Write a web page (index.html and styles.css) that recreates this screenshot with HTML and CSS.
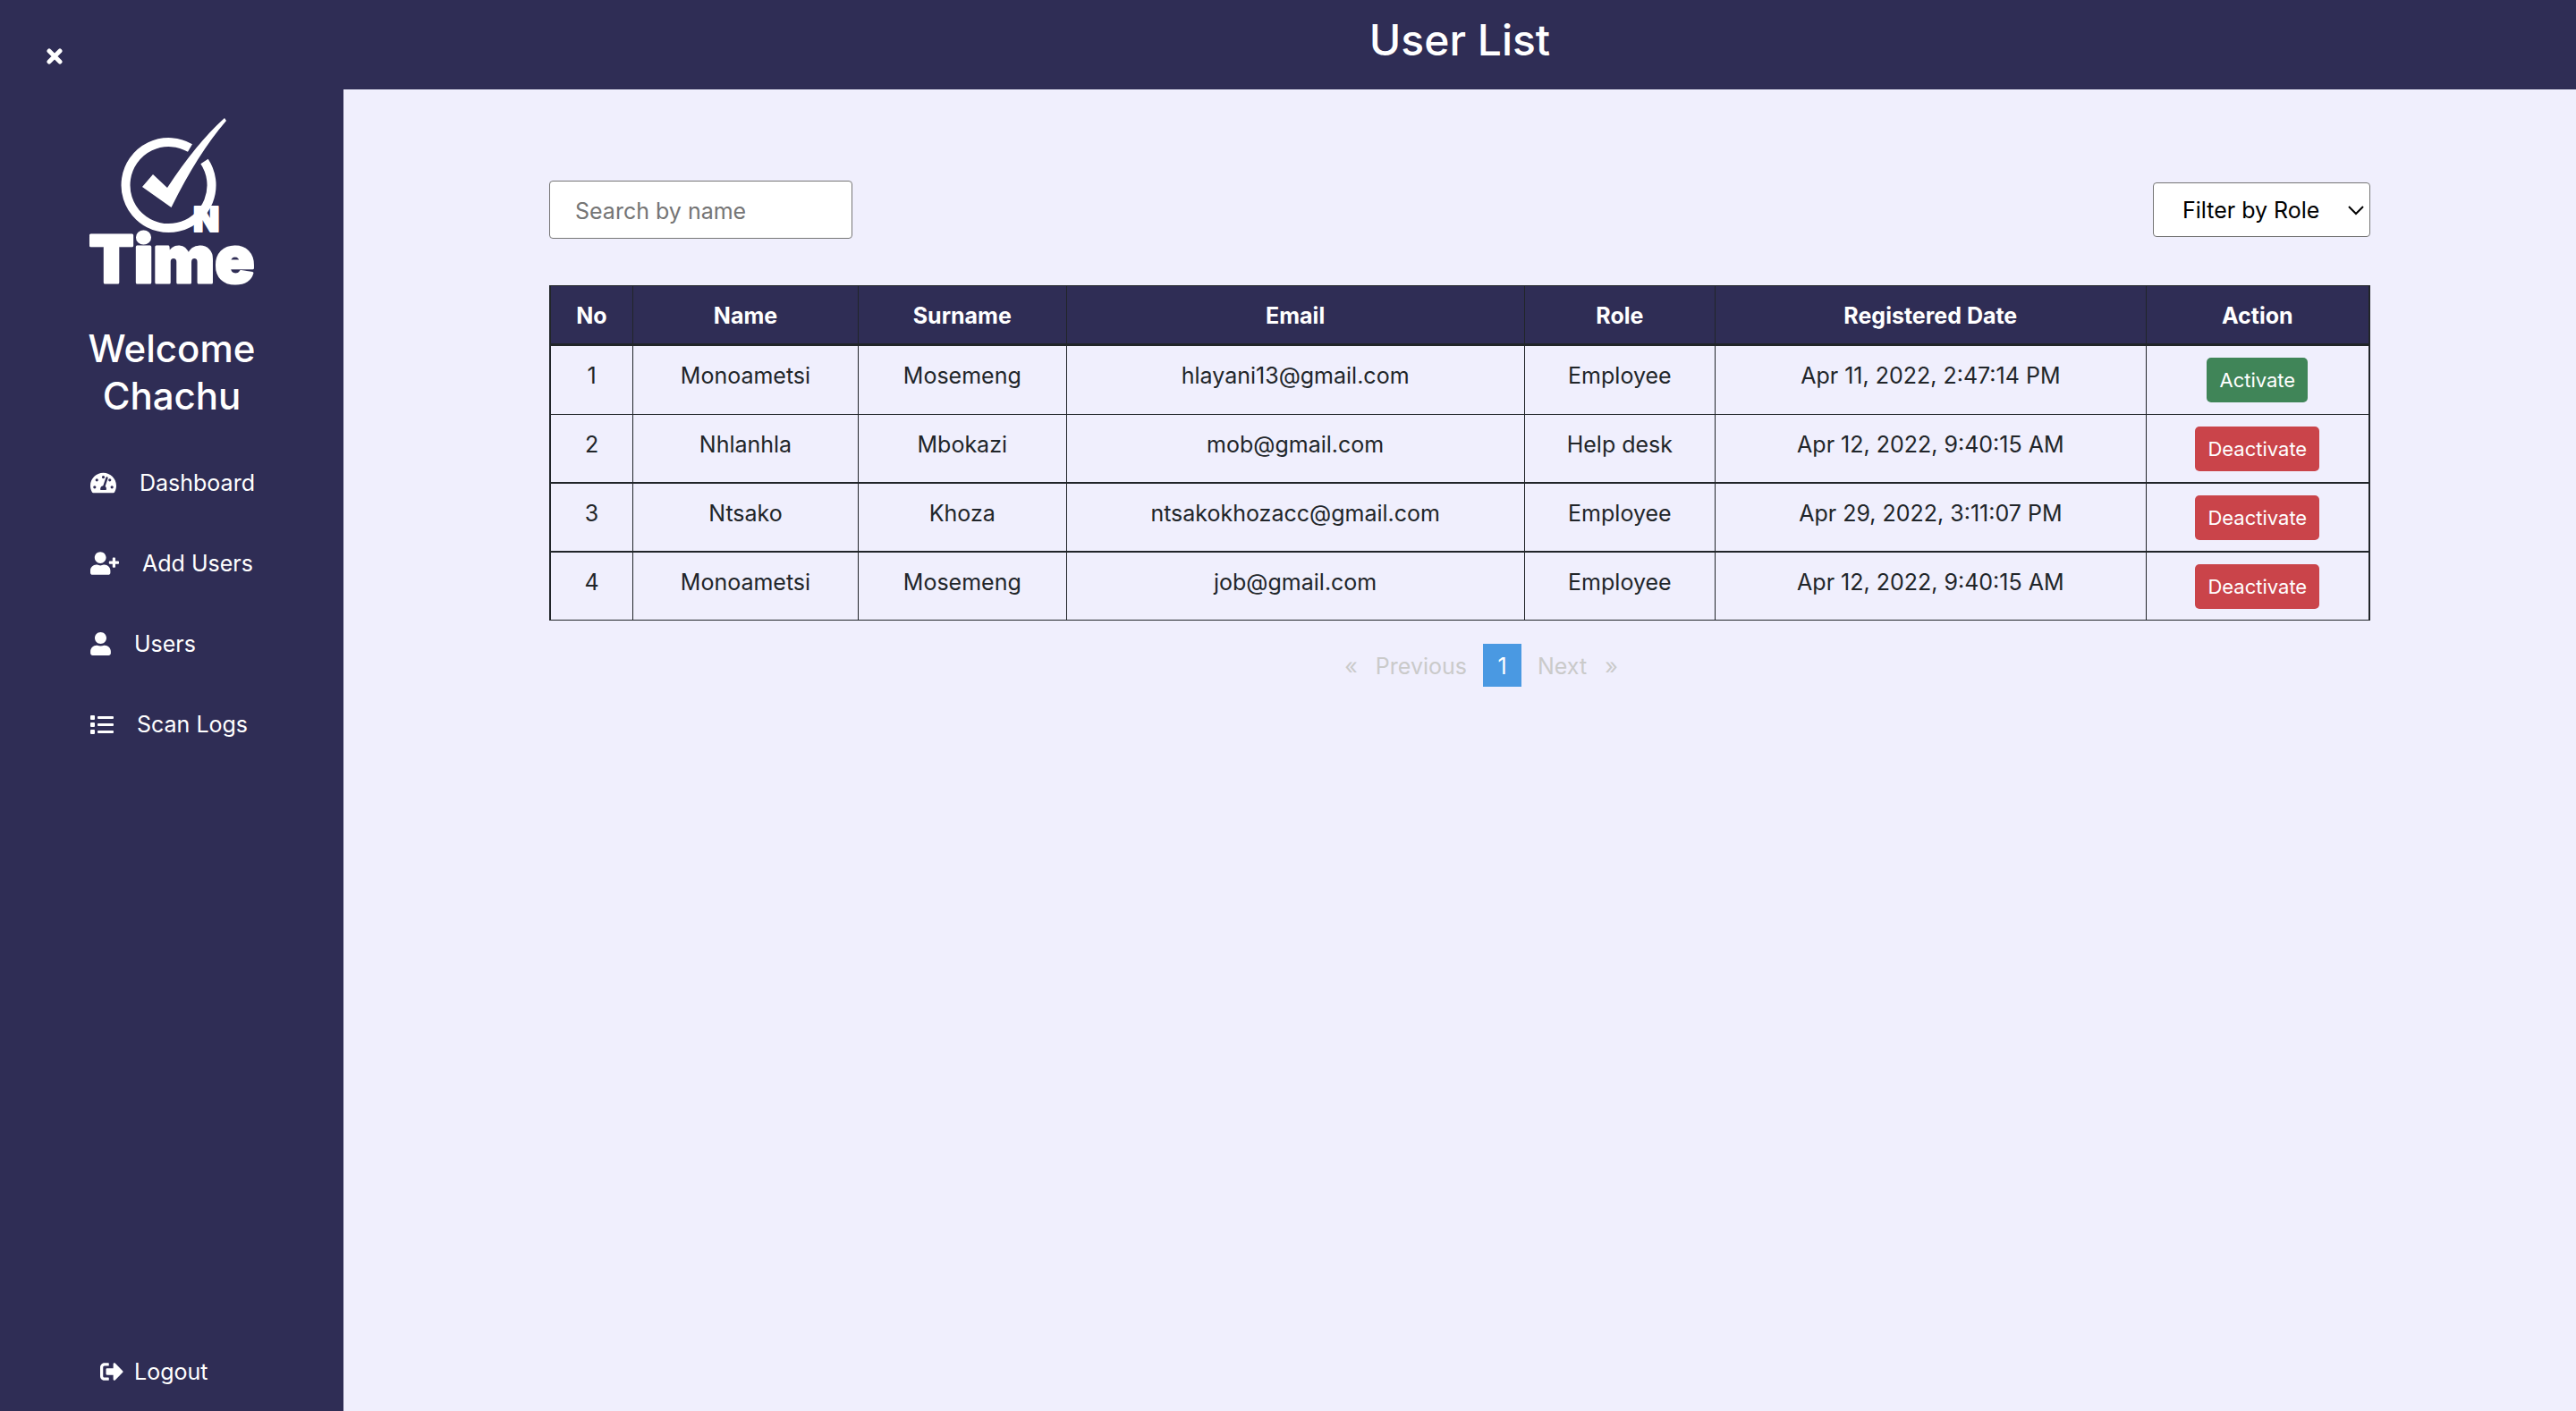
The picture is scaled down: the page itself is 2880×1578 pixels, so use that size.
FILE: index.html
```html
<!DOCTYPE html>
<html lang="en">
<head>
<meta charset="utf-8">
<title>User List</title>
<link rel="stylesheet" href="styles.css">
</head>
<body>
<div class="layout">
  <aside class="sidebar">
    <button class="close" type="button" aria-label="Close menu">
      <svg width="18" height="18" viewBox="0 0 18 18"><path d="M3 3L15 15M15 3L3 15" stroke="#fff" stroke-width="5" stroke-linecap="round"/></svg>
    </button>
    <div class="brand">
      <svg class="logo" viewBox="0 0 190 190" role="img" aria-label="On Time">
        <path d="M115.500 35.500A48 48 0 1 0 131.500 50.500" fill="none" stroke="#fff" stroke-width="10"/>
        <path d="M62 79L74 65L90 80Q122 31 154 2L156 5Q124 42 94.500 102Z" fill="#fff"/>
        <text class="logo-n" x="119" y="129">N</text>
        <text class="logo-time" x="95" y="186">Time</text>
      </svg>
      <h2 class="welcome">Welcome<br>Chachu</h2>
    </div>
    <nav class="nav">
      <a href="#"><svg width="29" height="26" viewBox="0 0 576 512"><path fill="#fff" fill-rule="evenodd" d="M288 32C129 32 0 161 0 320c0 53 14 102 39 145 6 9 16 15 27 15h444c11 0 21-6 27-15 25-43 39-92 39-145C576 161 447 32 288 32zM288 96a32 32 0 1 1 0 64 32 32 0 1 1 0-64zM96 384a32 32 0 1 1 0-64 32 32 0 1 1 0 64zM144 224a32 32 0 1 1 0-64 32 32 0 1 1 0 64zM391 151L330 335c21 12 35 37 22 81H224c-9-50 13-95 60-96l61-184c9-24 54-10 46 15zM432 224a32 32 0 1 1 0-64 32 32 0 1 1 0 64zM480 384a32 32 0 1 1 0-64 32 32 0 1 1 0 64z"/></svg>Dashboard</a>
      <a href="#"><svg width="32" height="26" viewBox="0 0 640 512"><path fill="#fff" d="M624 208h-64v-64c0-8.800-7.200-16-16-16h-32c-8.800 0-16 7.200-16 16v64h-64c-8.800 0-16 7.200-16 16v32c0 8.800 7.200 16 16 16h64v64c0 8.800 7.200 16 16 16h32c8.800 0 16-7.200 16-16v-64h64c8.800 0 16-7.200 16-16v-32c0-8.800-7.200-16-16-16zm-400 48c70.700 0 128-57.300 128-128S294.700 0 224 0 96 57.300 96 128s57.300 128 128 128zm89.600 32h-16.700c-22.200 10.200-46.900 16-72.900 16s-50.600-5.800-72.900-16h-16.700C60.200 288 0 348.200 0 422.400V464c0 26.500 21.500 48 48 48h352c26.500 0 48-21.500 48-48v-41.600c0-74.200-60.200-134.400-134.400-134.400z"/></svg>Add Users</a>
      <a href="#"><svg width="23" height="26" viewBox="0 0 448 512"><path fill="#fff" d="M224 256c70.700 0 128-57.300 128-128S294.700 0 224 0 96 57.300 96 128s57.300 128 128 128zm89.600 32h-16.700c-22.200 10.200-46.900 16-72.900 16s-50.600-5.800-72.900-16h-16.700C60.200 288 0 348.200 0 422.400V464c0 26.500 21.500 48 48 48h352c26.500 0 48-21.500 48-48v-41.600c0-74.200-60.200-134.400-134.400-134.400z"/></svg>Users</a>
      <a href="#"><svg width="26" height="26" viewBox="0 0 26 26" fill="#fff"><rect y="3" width="5" height="5" rx="1"/><rect y="11" width="5" height="5" rx="1"/><rect y="19" width="5" height="5" rx="1"/><rect x="8" y="4" width="18" height="3" rx="1"/><rect x="8" y="12" width="18" height="3" rx="1"/><rect x="8" y="20" width="18" height="3" rx="1"/></svg>Scan Logs</a>
    </nav>
    <a class="logout" href="#"><svg width="26" height="26" viewBox="0 0 512 512"><path fill="#fff" d="M497 273L329 441c-15 15-41 4.500-41-17v-96H152c-13.300 0-24-10.700-24-24v-96c0-13.300 10.700-24 24-24h136V88c0-21.400 25.900-32 41-17l168 168c9.300 9.400 9.300 24.600 0 34zM192 436v-40c0-6.600-5.400-12-12-12H96c-17.700 0-32-14.300-32-32V160c0-17.700 14.300-32 32-32h84c6.600 0 12-5.400 12-12V76c0-6.600-5.400-12-12-12H96c-53 0-96 43-96 96v192c0 53 43 96 96 96h84c6.600 0 12-5.400 12-12z"/></svg>Logout</a>
  </aside>
  <div class="page">
    <header class="topbar"><h1>User List</h1></header>
    <main class="content">
      <div class="filters">
        <input class="search" type="text" placeholder="Search by name" aria-label="Search by name">
        <div class="select-wrap">
          <select class="role" aria-label="Filter by Role"><option>Filter by Role</option><option>Employee</option><option>Help desk</option></select>
          <svg class="chevron" width="20" height="12" viewBox="0 0 20 12"><path d="M2 2L10 10L18 2" fill="none" stroke="#000" stroke-width="2"/></svg>
        </div>
      </div>
      <table class="users">
        <thead>
          <tr><th class="c-no">No</th><th class="c-name">Name</th><th class="c-surname">Surname</th><th class="c-email">Email</th><th class="c-role">Role</th><th class="c-date">Registered Date</th><th class="c-action">Action</th></tr>
        </thead>
        <tbody>
          <tr><td>1</td><td>Monoametsi</td><td>Mosemeng</td><td>hlayani13@gmail.com</td><td>Employee</td><td>Apr 11, 2022, 2:47:14 PM</td><td><button class="btn btn-on" type="button">Activate</button></td></tr>
          <tr><td>2</td><td>Nhlanhla</td><td>Mbokazi</td><td>mob@gmail.com</td><td>Help desk</td><td>Apr 12, 2022, 9:40:15 AM</td><td><button class="btn btn-off" type="button">Deactivate</button></td></tr>
          <tr class="ruled"><td>3</td><td>Ntsako</td><td>Khoza</td><td>ntsakokhozacc@gmail.com</td><td>Employee</td><td>Apr 29, 2022, 3:11:07 PM</td><td><button class="btn btn-off" type="button">Deactivate</button></td></tr>
          <tr class="ruled"><td>4</td><td>Monoametsi</td><td>Mosemeng</td><td>job@gmail.com</td><td>Employee</td><td>Apr 12, 2022, 9:40:15 AM</td><td><button class="btn btn-off" type="button">Deactivate</button></td></tr>
        </tbody>
      </table>
      <nav class="pagination" aria-label="Pagination">
        <button type="button" disabled><span>«</span><span>Previous</span></button>
        <button class="current" type="button" aria-current="page">1</button>
        <button type="button" disabled><span>Next</span><span>»</span></button>
      </nav>
    </main>
  </div>
</div>
</body>
</html>
```
FILE: styles.css
```css
* { box-sizing: border-box; }

body {
  margin: 0;
  font-family: Inter, "Liberation Sans", sans-serif;
  font-size: 25px;
  line-height: 38px;
  color: #212529;
  background: #f0effd;
}

button, input, select { font: inherit; margin: 0; }
svg { flex: none; }

.layout {
  display: grid;
  grid-template-columns: 384px 1fr;
  min-height: 100vh;
}

.sidebar {
  display: flex;
  flex-direction: column;
  align-items: flex-start;
  background: #2f2d55;
  color: #fff;
}

.close {
  display: flex;
  margin: 54px 0 0 52px;
  padding: 0;
  border: 0;
  background: none;
}

.brand {
  align-self: stretch;
  display: flex;
  flex-direction: column;
  align-items: center;
  margin-top: 58px;
}

.logo {
  width: 190px;
  height: 190px;
  overflow: visible;
}

.logo text {
  font-weight: 900;
  text-anchor: middle;
  fill: #fff;
  stroke: #fff;
  stroke-linejoin: round;
}

.logo-time { font-size: 73px; stroke-width: 3px; }
.logo-n { font-size: 38px; stroke-width: 2px; }
.logo .logo-n { text-anchor: start; }

.welcome {
  margin: 43px 0 0;
  font-size: 42px;
  font-weight: 500;
  line-height: 53px;
  text-align: center;
}

.nav {
  display: flex;
  flex-direction: column;
  gap: 52px;
  margin: 52px 0 0 101px;
}

.nav a, .logout {
  display: flex;
  align-items: center;
  gap: 26px;
  color: #fff;
  text-decoration: none;
}

.logout {
  gap: 12px;
  margin: auto 0 25px 112px;
}

.page { min-width: 0; }

.topbar {
  height: 100px;
  padding: 15px 0;
  background: #2f2d55;
  color: #fff;
  text-align: center;
}

h1 {
  margin: 0;
  font-size: 48px;
  font-weight: 500;
  line-height: 60px;
}

.content { padding: 102px 230px 0; }

.filters {
  display: flex;
  justify-content: space-between;
  align-items: center;
}

.search, .role {
  border: 1px solid #767676;
  border-radius: 4px;
  background: #fff;
}

.search {
  width: 339px;
  height: 65px;
  padding: 2px 28px 0;
}

.search::placeholder { color: #757575; opacity: 1; }

.select-wrap { position: relative; }

.role {
  display: block;
  width: 243px;
  height: 61px;
  padding: 1px 36px 0 32px;
  appearance: none;
  color: #000;
}

.chevron {
  position: absolute;
  top: 25px;
  right: 6px;
  pointer-events: none;
}

.users {
  width: 100%;
  margin-top: 52px;
  border: 2px solid #212529;
  border-top-width: 1px;
  border-bottom-width: 1px;
  border-collapse: separate;
  border-spacing: 0;
  table-layout: fixed;
  text-align: center;
}

.users th, .users td {
  border-right: 1px solid #212529;
  vertical-align: top;
}

.users tr > :last-child { border-right: 0; }

.users th {
  height: 67px;
  padding: 14px 0 0;
  border-bottom: 3px solid #212529;
  background: #2f2d55;
  color: #fff;
  font-weight: 700;
}

.users td {
  height: 76px;
  padding: 14px 0 0;
}

.users td:last-child { padding: 13px 0 0; }

.users tbody tr + tr td { border-top: 1px solid #212529; }
.users tbody tr.ruled td { height: 77px; border-top-width: 2px; }

.c-no { width: 92px; }
.c-name { width: 12.4%; }
.c-surname { width: 11.45%; }
.c-email { width: 25.2%; }
.c-role { width: 10.5%; }
.c-date { width: 23.7%; }

.btn {
  display: inline-block;
  height: 50px;
  padding: 0 14px;
  border: 0;
  border-radius: 5px;
  color: #fff;
  font-size: 22px;
  line-height: 50px;
  vertical-align: top;
}

.btn-on { background: #408558; }
.btn-off { background: #ca444a; }

.pagination {
  display: flex;
  justify-content: center;
  gap: 18px;
  margin-top: 26px;
  padding-left: 48px;
}

.pagination button {
  display: flex;
  gap: 20px;
  align-items: center;
  height: 48px;
  padding: 2px 0 0;
  border: 0;
  background: none;
  color: #cacaca;
}

.pagination .current {
  justify-content: center;
  width: 43px;
  background: #4a99e2;
  color: #fff;
}
```
